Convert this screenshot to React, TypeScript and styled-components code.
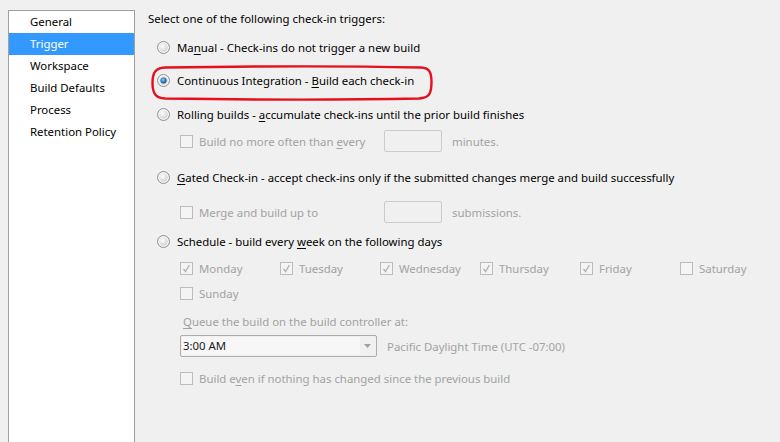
import React from "react";
import styled, { createGlobalStyle } from "styled-components";

const Global = createGlobalStyle`
  html, body { margin: 0; padding: 0; background: #f0f0f0; }
  body { font-family: "Segoe UI", "Noto Sans", sans-serif; font-size: 11.4px; color: #000; }
`;

const Page = styled.div`
  display: flex;
  height: 442px;
  padding: 10px 0 0 8px;
  box-sizing: border-box;
  overflow: hidden;
`;

const Sidebar = styled.ul`
  list-style: none;
  margin: 0;
  padding: 0;
  width: 127px;
  box-sizing: border-box;
  height: 460px;
  background: #fff;
  border: 1px solid #a0a0a0;
  border-bottom: none;
`;

const NavItem = styled.li<{ $active?: boolean }>`
  height: 22px;
  line-height: 22px;
  padding-left: 21px;
  background: ${(p) => (p.$active ? "#3399ff" : "transparent")};
  color: ${(p) => (p.$active ? "#fff" : "#000")};
`;

const Main = styled.div`
  position: relative;
  flex: 1;
  margin-left: 13px;
  display: flex;
  flex-direction: column;
`;

const Heading = styled.div`
  height: 18px;
  line-height: 18px;
`;

const Row = styled.div<{ $mt: number; $indent?: number; $disabled?: boolean }>`
  display: flex;
  align-items: center;
  height: 22px;
  margin-top: ${(p) => p.$mt}px;
  padding-left: ${(p) => p.$indent ?? 9}px;
  color: ${(p) => (p.$disabled ? "#a2a2a2" : "#000")};
  white-space: nowrap;
`;

const U = styled.span`
  text-decoration: underline;
  text-underline-offset: 2px;
`;

const RadioLabel = styled.span`
  margin-left: 7px;
`;

const CheckLabel = styled.span`
  margin-left: 6px;
`;

const CheckItem = styled.div<{ $w?: number }>`
  display: flex;
  align-items: center;
  width: ${(p) => (p.$w ? `${p.$w}px` : "auto")};
`;

const TextBox = styled.div`
  width: 58px;
  height: 22px;
  box-sizing: border-box;
  border: 1px solid #cbcbcb;
  border-radius: 2px;
  background: #f0f0f0;
`;

const Suffix = styled.span`
  margin-left: 10px;
`;

const QueueLabel = styled.div`
  height: 22px;
  line-height: 22px;
  margin-top: 7px;
  padding-left: 35px;
  color: #a2a2a2;
`;

const ComboRow = styled.div`
  display: flex;
  align-items: center;
  margin-top: 2px;
  padding-left: 32px;
  color: #a2a2a2;
  height: 22px;
`;

const Combo = styled.div`
  width: 197px;
  height: 22px;
  box-sizing: border-box;
  border: 1px solid #acacac;
  border-radius: 2px;
  background: #f0f0f0;
  display: flex;
  align-items: stretch;
  padding: 1px;
`;

const ComboText = styled.div`
  width: 177px;
  background: #f7f7f7;
  color: #1a1a1a;
  line-height: 18px;
  padding-left: 1px;
`;

const ComboArrow = styled.div`
  flex: 1;
  display: flex;
  align-items: center;
  justify-content: center;
`;

const TzLabel = styled.span`
  margin-left: 10px;
`;

const Annotation = styled.svg`
  position: absolute;
  left: 3px;
  top: 55px;
  overflow: visible;
  pointer-events: none;
`;

function Radio({ checked }: { checked?: boolean }) {
  return (
    <svg width="13" height="13" viewBox="0 0 13 13" style={{ flex: "none" }}>
      <defs>
        <radialGradient id="rg" cx="0.4" cy="0.35" r="0.7">
          <stop offset="0" stopColor="#ffffff" />
          <stop offset="1" stopColor="#cfcfcf" />
        </radialGradient>
        <radialGradient id="rb" cx="0.4" cy="0.35" r="0.7">
          <stop offset="0" stopColor="#8fd3ff" />
          <stop offset="0.6" stopColor="#2b87d1" />
          <stop offset="1" stopColor="#0f4e8f" />
        </radialGradient>
      </defs>
      <circle cx="6.5" cy="6.5" r="6" fill="#f4f4f4" stroke="#8f8f8f" strokeWidth="1" />
      <circle cx="6.5" cy="6.5" r="4.2" fill="url(#rg)" />
      {checked && <circle cx="6.5" cy="6.5" r="2.8" fill="url(#rb)" stroke="#1b4f86" strokeWidth="0.6" />}
    </svg>
  );
}

function Check({ checked }: { checked?: boolean }) {
  return (
    <svg width="13" height="13" viewBox="0 0 13 13" style={{ flex: "none" }}>
      <rect x="0.5" y="0.5" width="12" height="12" fill="#f4f4f4" stroke="#bcbcbc" />
      {checked && (
        <path d="M3.5 6.8 L5.5 9.5 L9.5 3" fill="none" stroke="#b4b4b4" strokeWidth="1.4" />
      )}
    </svg>
  );
}

const days: [string, boolean][] = [
  ["Monday", true],
  ["Tuesday", true],
  ["Wednesday", true],
  ["Thursday", true],
  ["Friday", true],
  ["Saturday", false],
];

export default function App() {
  return (
    <>
      <Global />
      <Page>
        <Sidebar>
          <NavItem>General</NavItem>
          <NavItem $active>Trigger</NavItem>
          <NavItem>Workspace</NavItem>
          <NavItem>Build Defaults</NavItem>
          <NavItem>Process</NavItem>
          <NavItem>Retention Policy</NavItem>
        </Sidebar>
        <Main>
          <Heading>Select one of the following check-in triggers:</Heading>
          <Row $mt={8}>
            <Radio />
            <RadioLabel>
              Ma<U>n</U>ual - Check-ins do not trigger a new build
            </RadioLabel>
          </Row>
          <Row $mt={11}>
            <Radio checked />
            <RadioLabel>
              Continuous Integration - <U>B</U>uild each check-in
            </RadioLabel>
          </Row>
          <Row $mt={12}>
            <Radio />
            <RadioLabel>
              Rolling builds - <U>a</U>ccumulate check-ins until the prior build finishes
            </RadioLabel>
          </Row>
          <Row $mt={5} $indent={32} $disabled>
            <CheckItem $w={204}>
              <Check />
              <CheckLabel>
                Build no more often than <U>e</U>very
              </CheckLabel>
            </CheckItem>
            <TextBox />
            <Suffix>minutes.</Suffix>
          </Row>
          <Row $mt={14}>
            <Radio />
            <RadioLabel>
              <U>G</U>ated Check-in - accept check-ins only if the submitted changes merge and build successfully
            </RadioLabel>
          </Row>
          <Row $mt={13} $indent={32} $disabled>
            <CheckItem $w={204}>
              <Check />
              <CheckLabel>Merge and build up to</CheckLabel>
            </CheckItem>
            <TextBox />
            <Suffix>submissions.</Suffix>
          </Row>
          <Row $mt={7}>
            <Radio />
            <RadioLabel>
              Schedule - build every <U>w</U>eek on the following days
            </RadioLabel>
          </Row>
          <Row $mt={5} $indent={32} $disabled>
            {days.map(([d, c]) => (
              <CheckItem key={d} $w={100}>
                <Check checked={c} />
                <CheckLabel>{d}</CheckLabel>
              </CheckItem>
            ))}
          </Row>
          <Row $mt={3} $indent={32} $disabled>
            <CheckItem>
              <Check />
              <CheckLabel>Sunday</CheckLabel>
            </CheckItem>
          </Row>
          <QueueLabel>
            <U>Q</U>ueue the build on the build controller at:
          </QueueLabel>
          <ComboRow>
            <Combo>
              <ComboText>3:00 AM</ComboText>
              <ComboArrow>
                <svg width="7" height="4" viewBox="0 0 7 4">
                  <path d="M0 0 H7 L3.5 4 Z" fill="#a0a0a0" />
                </svg>
              </ComboArrow>
            </Combo>
            <TzLabel>Pacific Daylight Time (UTC -07:00)</TzLabel>
          </ComboRow>
          <Row $mt={10} $indent={32} $disabled>
            <CheckItem>
              <Check />
              <CheckLabel>
                Build e<U>v</U>en if nothing has changed since the previous build
              </CheckLabel>
            </CheckItem>
          </Row>
          <Annotation width="282" height="36" viewBox="0 0 282 36">
            <path
              d="M14 2.5 C80 1.5 200 1 270 2.5 C279 3 280.5 8 280.5 17 C280.5 29 278 33 268 33.5 C190 35 80 34.5 14 33.5 C5 33 1.5 29 1.5 18 C1.5 7 5 3 14 2.5 Z"
              fill="none"
              stroke="#e5101c"
              strokeWidth="2.4"
            />
          </Annotation>
        </Main>
      </Page>
    </>
  );
}
